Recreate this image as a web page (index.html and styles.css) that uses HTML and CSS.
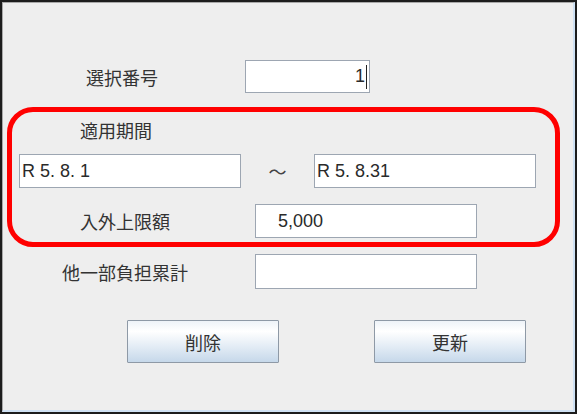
FILE: index.html
```html
<!DOCTYPE html>
<html lang="ja">
<head>
    <meta charset="UTF-8">
    <meta name="viewport" content="width=device-width, initial-scale=1.0">
    <title>入外上限額</title>
    <link rel="stylesheet" href="styles.css">
</head>
<body>
    <div class="window">
        <div class="pane">
            <div class="row row-select">
                <span class="label">選択番号</span>
                <div class="field field-select right">1<span class="caret"></span></div>
            </div>

            <div class="period">
                <div class="period-title">適用期間</div>
                <div class="date-row">
                    <div class="field field-date">R 5. 8. 1</div>
                    <span class="tilde">〜</span>
                    <div class="field field-date">R 5. 8.31</div>
                </div>
                <div class="row row-limit">
                    <span class="label">入外上限額</span>
                    <div class="field field-wide amount">5,000</div>
                </div>
            </div>

            <div class="row row-total">
                <span class="label">他一部負担累計</span>
                <div class="field field-wide"></div>
            </div>

            <div class="buttons">
                <button class="btn">削除</button>
                <button class="btn">更新</button>
            </div>
        </div>
    </div>
</body>
</html>
```

FILE: styles.css
```css
body { margin: 0; background: #eeeeee; font-family: "Noto Sans CJK JP", "Noto Sans", sans-serif; color: #333; }
.window { width: 577px; height: 414px; box-sizing: border-box; border: 2px solid #1c1c1c; background: #eeeeee; }
.pane { height: 100%; box-sizing: border-box; border-left: 1px solid #a8a8a8; border-top: 1px solid #a8a8a8; border-right: 2px solid #cfe1f3; border-bottom: 2px solid #cfe1f3; }

.row { display: flex; align-items: center; }
.label { font-size: 18px; line-height: 22px; white-space: nowrap; }

.field { box-sizing: border-box; display: flex; align-items: center; background: #fff; border: 1px solid #9da6b2; font-family: "Liberation Sans", Arial, sans-serif; font-size: 18px; color: #2a2a2a; padding: 0 2px; }
.field.right { justify-content: flex-end; }
.caret { display: inline-block; width: 1px; height: 24px; background: #222; margin-left: 1px; }

.row-select { margin-top: 57px; }
.row-select .label { margin-left: 83px; width: 159px; }
.field-select { width: 125px; height: 33px; }

.period { margin: 14px 0 0 4px; width: 553px; height: 140px; box-sizing: border-box; border: 5px solid #ff0000; border-radius: 26px; }
.period-title { font-size: 18px; line-height: 22px; margin: 7px 0 0 68px; }
.date-row { display: flex; align-items: center; margin: 13px 0 0 7px; }
.field-date { width: 222px; height: 34px; }
.tilde { width: 73px; text-align: center; font-size: 18px; color: #444; }

.row-limit { margin-top: 16px; }
.row-limit .label { margin-left: 68px; width: 175px; }
.field-wide { width: 222px; height: 34px; }
.amount { padding-left: 22px; }

.row-total { margin-top: 7px; }
.row-total .label { margin-left: 59px; width: 193px; }
.row-total .field-wide { height: 35px; }

.buttons { display: flex; gap: 95px; margin: 31px 0 0 124px; }
.btn { width: 152px; height: 43px; padding: 0; border: 1px solid #8e99a6; border-radius: 1px; background: linear-gradient(#eef3f8, #ffffff 25%, #dde8f3 70%, #c6d8ea); font-family: "Noto Sans CJK JP", sans-serif; font-size: 18px; color: #333; }
```
